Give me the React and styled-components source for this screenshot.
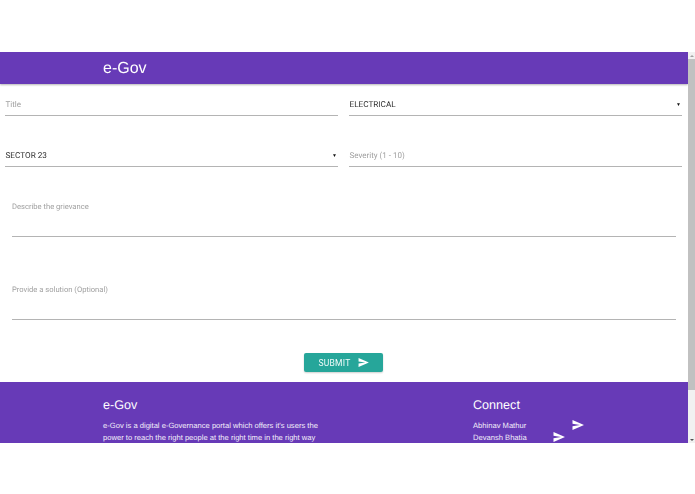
import React from "react";
import styled, { createGlobalStyle } from "styled-components";

const Global = createGlobalStyle`
  html, body { margin: 0; padding: 0; background: #fff; }
  body { font-family: "Roboto", "Liberation Sans", sans-serif; overflow: hidden; text-rendering: geometricPrecision; }
`;
const Page = styled.div`
  padding-top: 52px;
  width: 695px;
  height: 494px;
  box-sizing: border-box;
`;
const Frame = styled.div`
  display: flex;
  height: 391px;
`;
const Viewport = styled.div`
  flex: 1;
  min-width: 0;
  height: 391px;
  overflow: hidden;
  display: flex;
  flex-direction: column;
  opacity: 0.999;
`;
const Scrollbar = styled.div`
  width: 7px;
  flex: none;
  background: #f1f1f1;
  display: flex;
  flex-direction: column;
  align-items: stretch;
`;
const ScrollArrow = styled.div`
  height: 7px;
  flex: none;
  display: flex;
  align-items: center;
  justify-content: center;
  &::after {
    content: "";
    border-left: 2px solid transparent;
    border-right: 2px solid transparent;
    ${p => (p.$down ? "border-top: 2px solid #505050;" : "border-bottom: 2px solid #a0a0a0;")}
  }
`;
const ScrollThumb = styled.div`
  height: 331px;
  background: #c1c1c1;
  flex: none;
`;
const ScrollGap = styled.div`flex: 1;`;
const Header = styled.header`
  height: 32px;
  flex: none;
  background: #673ab7;
  box-shadow: 0 1px 2px rgba(0,0,0,0.3);
  padding-left: 103px;
  display: flex;
  align-items: center;
  position: relative;
`;
const Brand = styled.div`
  font-family: "Liberation Sans", sans-serif;
  font-size: 16px;
  color: #fff;
  padding-top: 2px;
`;
const Form = styled.div`
  flex: none;
  height: 298px;
  display: flex;
  flex-direction: column;
`;
const Row = styled.div`
  display: grid;
  grid-template-columns: 333px 333px;
  column-gap: 11px;
  padding-left: 5px;
  height: 51px;
`;
const Field = styled.div`
  height: 32px;
  border-bottom: 1px solid #b4b4b4;
  display: flex;
  align-items: flex-end;
  justify-content: space-between;
  padding-bottom: 5px;
  box-sizing: border-box;
  line-height: 10px;
  font-size: ${p => (p.$placeholder ? "8px" : "8.2px")};
  color: ${p => (p.$placeholder ? "#a0a0a0" : "#333")};
  padding-left: 0.5px;
  padding-right: 1px;
`;
const Caret = styled.span`
  font-size: 5px;
  color: #111;
`;
const Area = styled.div`
  margin: 0 12px;
  height: 35px;
  box-sizing: border-box;
  border-bottom: 1px solid #b4b4b4;
  font-size: 7.6px;
  color: #a0a0a0;
  line-height: 10px;
`;
const AreaBlock = styled.div`
  height: 83px;
  padding-top: 16px;
  box-sizing: border-box;
`;
const Submit = styled.button`
  align-self: flex-start;
  margin: 1px 0 0 304px;
  width: 79px;
  height: 19px;
  border: 0;
  border-radius: 2px;
  background: #26a69a;
  color: #f2fbfa;
  font-family: "Roboto", sans-serif;
  font-size: 8.5px;
  letter-spacing: 0.25px;
  display: flex;
  align-items: center;
  justify-content: center;
  gap: 7px;
  padding: 0;
  box-shadow: 0 1px 2px rgba(0,0,0,0.2);
`;
const Footer = styled.footer`
  flex: none;
  background: #673ab7;
  color: #fff;
  height: 180px;
  display: grid;
  grid-template-columns: 370px 1fr;
  padding-left: 103px;
  padding-top: 16px;
  box-sizing: border-box;
  font-family: "Liberation Sans", sans-serif;
`;
const FootTitle = styled.div`
  font-size: 12.6px;
  line-height: 14px;
  margin-bottom: 8px;
`;
const FootText = styled.div`
  font-size: 7.6px;
  line-height: 11.5px;
  color: #f3eefa;
  width: 222px;
`;
const Contact = styled.div`
  display: flex;
  align-items: flex-start;
  font-size: 7.6px;
  line-height: 11.5px;
  color: #f3eefa;
  height: 11.5px;
`;
const SendIcon = styled.svg`
  width: ${p => p.$w || 12}px;
  height: ${p => p.$h || 10}px;
  fill: #fff;
  flex: none;
  margin-left: ${p => p.$ml || 0}px;
`;
const Send = ({ ml, w, h }) => (
  <SendIcon viewBox="0 0 24 20" $ml={ml} $w={w} $h={h}>
    <path d="M1 0 L24 10 L1 20 L1 12.4 L16 10 L1 7.6 Z" />
  </SendIcon>
);

export default function App() {
  return (
    <Page>
      <Global />
      <Frame>
        <Viewport>
          <Header><Brand>e-Gov</Brand></Header>
          <Form>
            <Row>
              <Field $placeholder>Title</Field>
              <Field>ELECTRICAL<Caret>▼</Caret></Field>
            </Row>
            <Row>
              <Field>SECTOR 23<Caret>▼</Caret></Field>
              <Field $placeholder>Severity (1 - 10)</Field>
            </Row>
            <AreaBlock><Area>Describe the grievance</Area></AreaBlock>
            <AreaBlock><Area>Provide a solution (Optional)</Area></AreaBlock>
            <Submit>SUBMIT <Send w={11} h={9} /></Submit>
          </Form>
          <Footer>
            <div>
              <FootTitle>e-Gov</FootTitle>
              <FootText>e-Gov is a digital e-Governance portal which offers it's users the power to reach the right people at the right time in the right way</FootText>
            </div>
            <div>
              <FootTitle>Connect</FootTitle>
              <Contact>Abhinav Mathur<Send ml={46} /></Contact>
              <Contact>Devansh Bhatia<Send ml={26} /></Contact>
            </div>
          </Footer>
        </Viewport>
        <Scrollbar>
          <ScrollArrow />
          <ScrollThumb />
          <ScrollGap />
          <ScrollArrow $down />
        </Scrollbar>
      </Frame>
    </Page>
  );
}
